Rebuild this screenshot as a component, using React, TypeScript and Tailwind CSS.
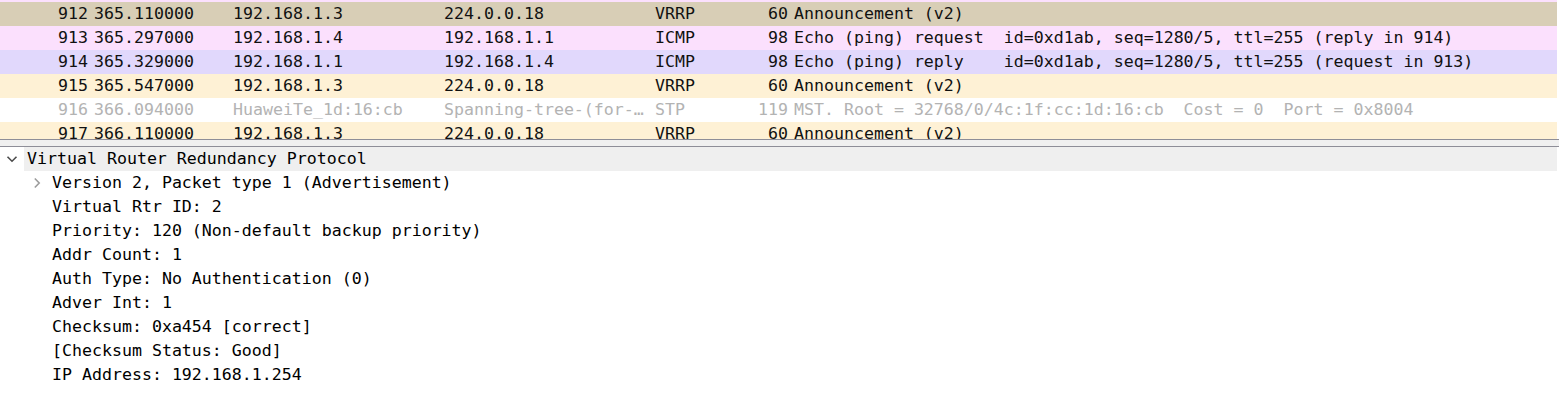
import React from "react";

type Packet = {
  no: string;
  time: string;
  src: string;
  dst: string;
  proto: string;
  len: string;
  info: string;
  bg: string;
  fg: string;
};

const packets: Packet[] = [
  { no: "912", time: "365.110000", src: "192.168.1.3", dst: "224.0.0.18", proto: "VRRP", len: "60", info: "Announcement (v2)", bg: "bg-[#d8ceb6]", fg: "text-[#111111]" },
  { no: "913", time: "365.297000", src: "192.168.1.4", dst: "192.168.1.1", proto: "ICMP", len: "98", info: "Echo (ping) request  id=0xd1ab, seq=1280/5, ttl=255 (reply in 914)", bg: "bg-[#fbe0fd]", fg: "text-[#111111]" },
  { no: "914", time: "365.329000", src: "192.168.1.1", dst: "192.168.1.4", proto: "ICMP", len: "98", info: "Echo (ping) reply    id=0xd1ab, seq=1280/5, ttl=255 (request in 913)", bg: "bg-[#e1d8fc]", fg: "text-[#111111]" },
  { no: "915", time: "365.547000", src: "192.168.1.3", dst: "224.0.0.18", proto: "VRRP", len: "60", info: "Announcement (v2)", bg: "bg-[#fef1d5]", fg: "text-[#111111]" },
  { no: "916", time: "366.094000", src: "HuaweiTe_1d:16:cb", dst: "Spanning-tree-(for-…", proto: "STP", len: "119", info: "MST. Root = 32768/0/4c:1f:cc:1d:16:cb  Cost = 0  Port = 0x8004", bg: "bg-white", fg: "text-[#b3b3b3]" },
  { no: "917", time: "366.110000", src: "192.168.1.3", dst: "224.0.0.18", proto: "VRRP", len: "60", info: "Announcement (v2)", bg: "bg-[#fef1d5]", fg: "text-[#111111]" },
];

const fields = [
  "Virtual Rtr ID: 2",
  "Priority: 120 (Non-default backup priority)",
  "Addr Count: 1",
  "Auth Type: No Authentication (0)",
  "Adver Int: 1",
  "Checksum: 0xa454 [correct]",
  "[Checksum Status: Good]",
  "IP Address: 192.168.1.254",
];

const PacketRow = ({ p }: { p: Packet }) => (
  <div className={`flex h-[24px] shrink-0 items-center whitespace-pre ${p.bg} ${p.fg}`}>
    <div className="w-[88px] text-right">{p.no}</div>
    <div className="ml-[6px] w-[139px]">{p.time}</div>
    <div className="w-[211px]">{p.src}</div>
    <div className="w-[211px]">{p.dst}</div>
    <div className="w-[100px]">{p.proto}</div>
    <div className="w-[33px] text-right">{p.len}</div>
    <div className="ml-[6px] flex-1">{p.info}</div>
  </div>
);

const App = () => {
  return (
    <div className="h-[403px] w-full overflow-hidden bg-white text-[16.6px] leading-[24px] text-black [font-family:'DejaVu_Sans_Mono','Liberation_Mono',monospace]">
      {/* Packet list */}
      <div className="flex h-[139px] flex-col overflow-hidden pr-[2px]">
        <div className="h-[2px] shrink-0 bg-[#fbe0fd]" />
        {packets.map((p) => (
          <PacketRow key={p.no} p={p} />
        ))}
      </div>

      {/* Splitter */}
      <div className="h-[8px] border-y border-[#8e8e98] bg-[#f0f0f0]" />

      {/* Details tree */}
      <div className="flex flex-col pr-[2px]">
        <div className="flex h-[24px] items-center">
          <div className="flex w-[24px] justify-center pl-[0px]">
            <svg width="12" height="8" viewBox="0 0 12 8" className="-ml-[1px]">
              <path d="M1.5 1.8 L6 6.2 L10.5 1.8" fill="none" stroke="#4a4a4a" strokeWidth="1.6" />
            </svg>
          </div>
          <div className="flex-1 bg-[#efefef] pl-[3px]">Virtual Router Redundancy Protocol</div>
        </div>
        <div className="flex h-[24px] items-center">
          <div className="flex w-[52px] justify-end pr-[11px]">
            <svg width="8" height="12" viewBox="0 0 8 12">
              <path d="M1.8 1.5 L6.2 6 L1.8 10.5" fill="none" stroke="#9c9c9c" strokeWidth="1.6" />
            </svg>
          </div>
          <div>Version 2, Packet type 1 (Advertisement)</div>
        </div>
        {fields.map((f) => (
          <div key={f} className="h-[24px] pl-[52px]">
            {f}
          </div>
        ))}
      </div>
    </div>
  );
};

export default App;
